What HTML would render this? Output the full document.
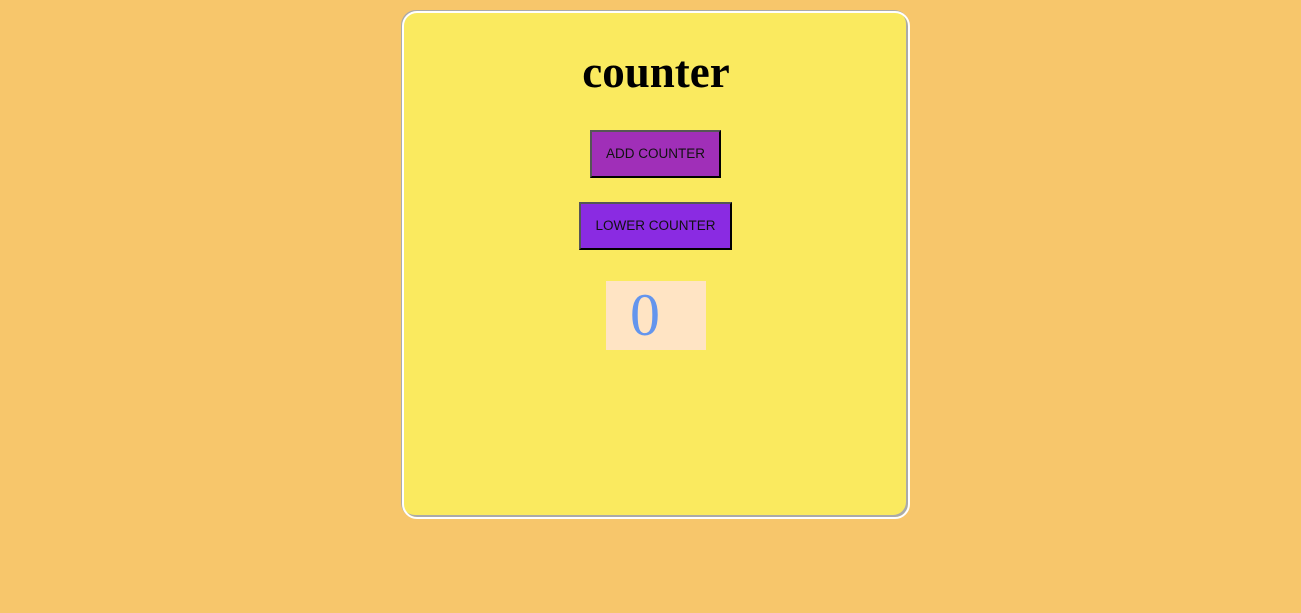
<!DOCTYPE html>
<html><head><style>
html,body{margin:0;padding:0;}
body{width:1301px;height:613px;background:#f7c66b;position:relative;overflow:hidden;font-family:"Liberation Sans",sans-serif;}
.card{position:absolute;left:402px;top:11px;width:504px;height:504px;background:#faea5f;border:2px solid #fff;border-radius:15px;box-shadow:-1px -1px 0 #aaa, inset -2px -2px 0 #aaa;}
h1{position:absolute;left:406px;width:500px;top:47px;margin:0;text-align:center;font-family:"Liberation Serif",serif;font-weight:bold;font-size:45px;line-height:50px;color:#000;}
.btn{position:absolute;box-sizing:border-box;border:2px solid;border-color:#555 #000 #000 #555;font-size:13.5px;color:#111;text-align:center;line-height:44px;}
.cnt{position:absolute;left:606px;top:281px;width:100px;height:69px;background:#ffe4c4;color:#6495ed;font-family:"Liberation Serif",serif;font-size:60px;line-height:69px;}
</style></head><body>
<div class="card"></div>
<h1>counter</h1>
<div class="btn" style="left:590px;top:130px;width:131px;height:48px;background:#a02fb8;">ADD COUNTER</div>
<div class="btn" style="left:579px;top:202px;width:153px;height:48px;background:#8a2be2;">LOWER COUNTER</div>
<div class="cnt"><span style="position:absolute;left:24px;top:0">0</span></div>
</body></html>
